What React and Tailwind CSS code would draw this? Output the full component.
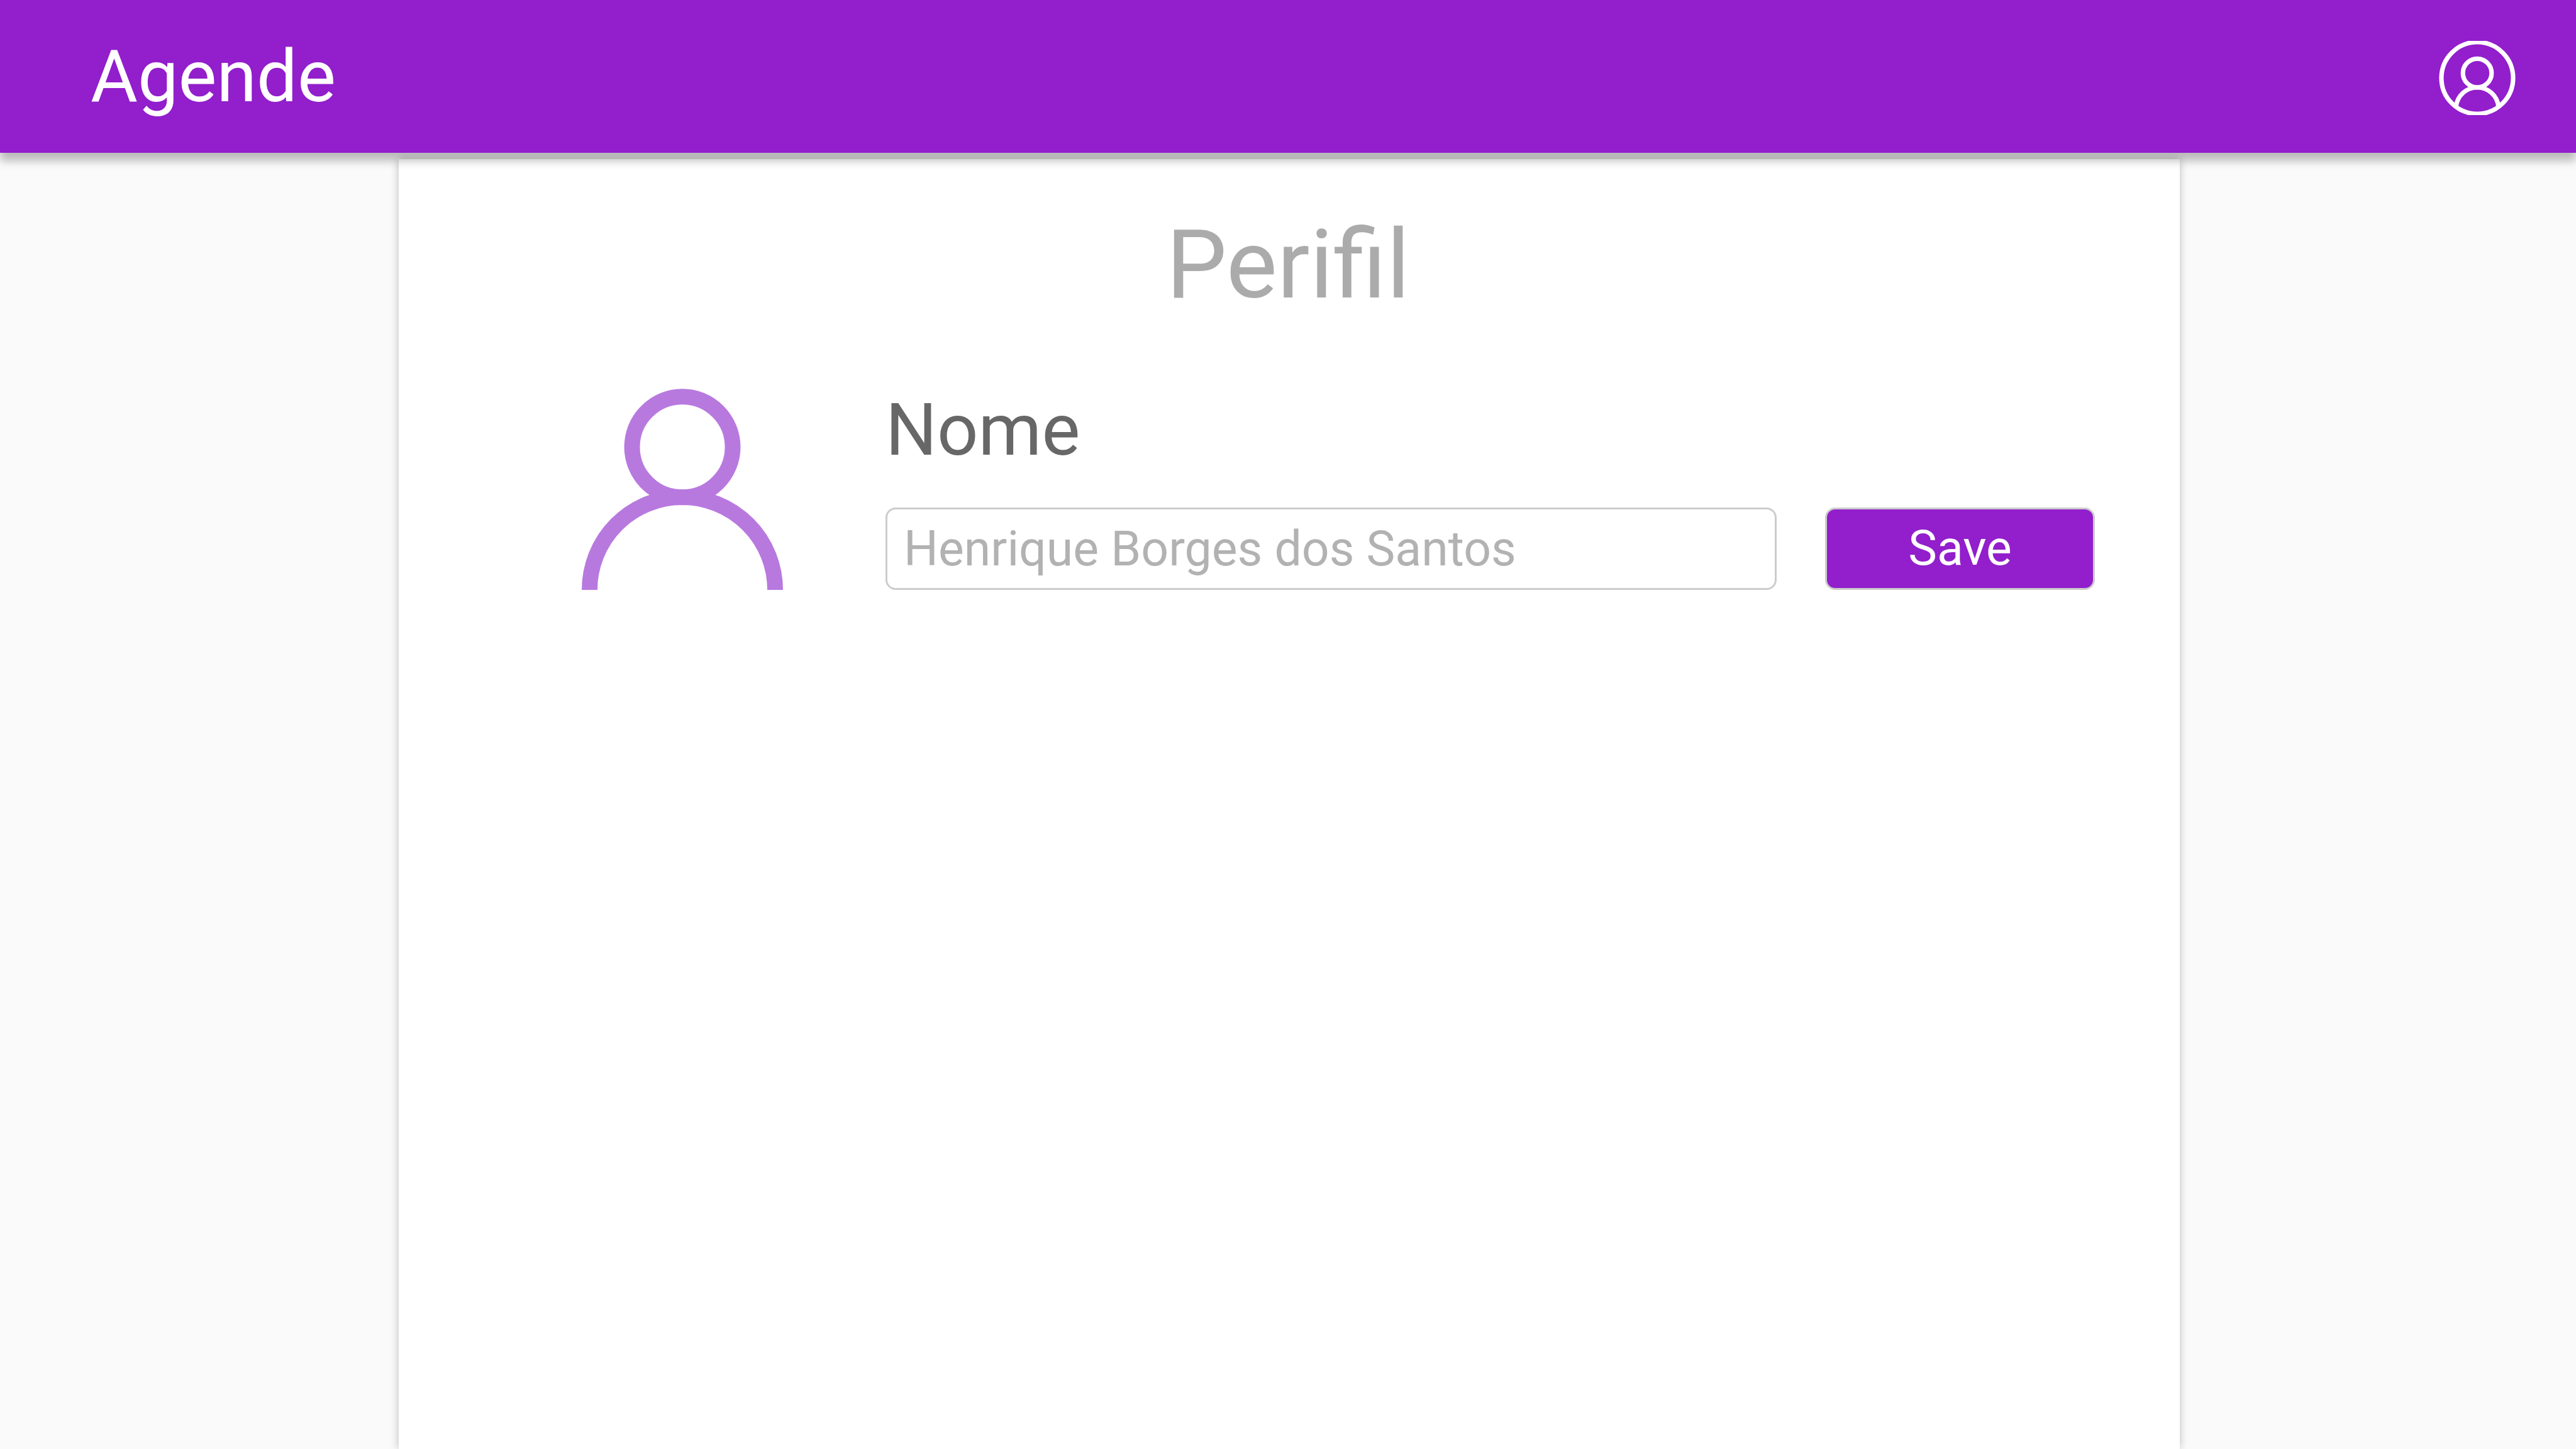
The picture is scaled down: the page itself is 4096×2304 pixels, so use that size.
function UserCircleIcon() {
  return (
    <svg viewBox="0 0 152 148" fill="none" stroke="currentColor" strokeWidth="9" className="h-[118px] w-[122px]" aria-hidden="true">
      <circle cx="76" cy="74" r="71.5" />
      <circle cx="76" cy="64.2" r="28.6" />
      <path d="M33.66 131.6A42.5 42.5 0 0 1 118.34 131.6" />
    </svg>
  );
}

function UserIcon() {
  return (
    <svg viewBox="0 0 400 400" fill="none" stroke="currentColor" strokeWidth="31.2" className="size-80 shrink-0 text-[#b879df]" role="img" aria-label="Foto do perfil">
      <circle cx="200" cy="116" r="100" />
      <path d="M15.6 400A184.4 184.4 0 0 1 384.4 400" />
    </svg>
  );
}

function Header() {
  return (
    <header className="relative z-10 flex h-[243px] shrink-0 items-center justify-between bg-[#921ecc] pr-24 pl-36 text-white shadow-[0_13px_13px_rgba(0,0,0,0.25)]">
      <a href="#" className="text-[115px] leading-[135px]">Agende</a>
      <button type="button" aria-label="Conta" className="cursor-pointer pt-1">
        <UserCircleIcon />
      </button>
    </header>
  );
}

function ProfileForm() {
  return (
    <form className="mt-[107px] flex items-end gap-[163px] pr-[135px] pl-[291px]" onSubmit={(e) => e.preventDefault()}>
      <UserIcon />
      <div className="flex flex-1 flex-col gap-[57px]">
        <label htmlFor="nome" className="text-[115px] leading-[132px] text-[#676767]">Nome</label>
        <div className="flex gap-[77px]">
          <input
            id="nome"
            type="text"
            placeholder="Henrique Borges dos Santos"
            className="h-[131px] min-w-0 flex-1 rounded-2xl border-3 border-[#cccccc] bg-white px-[26px] text-[77px] text-[#676767] placeholder:text-[#b2b2b2]"
          />
          <button type="submit" className="h-[131px] w-[429px] cursor-pointer rounded-2xl border-3 border-[#cccccc] bg-[#921ecc] text-[77px] text-white">
            Save
          </button>
        </div>
      </div>
    </form>
  );
}

export default function App() {
  return (
    <div className="flex min-h-screen flex-col bg-[#fafafa] font-[Roboto,sans-serif]">
      <Header />
      <main className="mt-[10px] mr-[630px] ml-[634px] flex-1 bg-white pt-[78px] shadow-[0_0_13px_rgba(0,0,0,0.25)]">
        <h1 className="pr-1 text-center text-[153px] leading-[180px] text-[#ababab]">Perifil</h1>
        <ProfileForm />
      </main>
    </div>
  );
}
